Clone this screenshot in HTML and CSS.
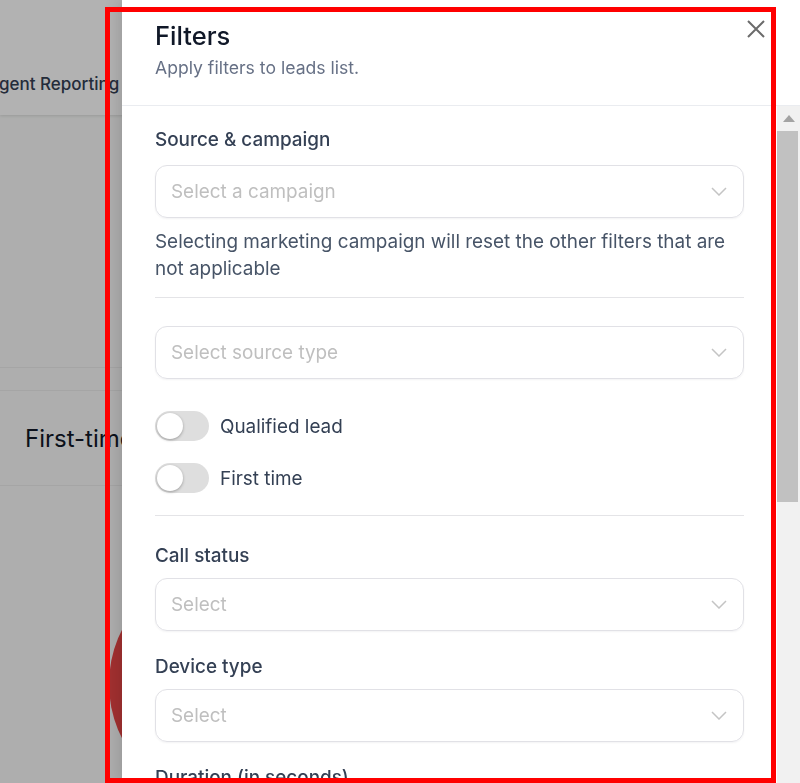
FILE: index.html
```html
<!DOCTYPE html>
<html lang="en">
<head>
    <meta charset="UTF-8">
    <meta name="viewport" content="width=device-width, initial-scale=1.0">
    <title>Leads - Filters</title>
    <link rel="stylesheet" href="styles.css">
</head>
<body>
    <!-- page behind the drawer -->
    <div class="app">
        <header class="topbar">
            <nav class="nav">
                <span class="nav-item">Agent Reporting</span>
            </nav>
        </header>
        <main class="content">
            <div class="summary"></div>
            <div class="row">
                <span class="row-title">First-time callers</span>
            </div>
            <div class="chart">
                <div class="pie"></div>
            </div>
        </main>
    </div>

    <div class="overlay"></div>

    <aside class="drawer">
        <div class="drawer-head">
            <div>
                <h2 class="drawer-title">Filters</h2>
                <p class="drawer-sub">Apply filters to leads list.</p>
            </div>
            <button class="close-btn" aria-label="Close">
                <svg width="18" height="18" viewBox="0 0 18 18">
                    <path d="M1 1L17 17M17 1L1 17" stroke="#6b6b6b" stroke-width="2" fill="none"/>
                </svg>
            </button>
        </div>

        <div class="drawer-main">
            <div class="drawer-body">
                <div class="field first">
                    <label class="field-label">Source &amp; campaign</label>
                    <div class="select">
                        <span>Select a campaign</span>
                        <svg class="chevron" width="16" height="9" viewBox="0 0 16 9"><path d="M1 1L8 8L15 1" stroke="#c4c4c4" stroke-width="1.5" fill="none"/></svg>
                    </div>
                    <p class="help">Selecting marketing campaign will reset the other filters that are not applicable</p>
                </div>

                <hr class="divider">

                <div class="select">
                    <span>Select source type</span>
                    <svg class="chevron" width="16" height="9" viewBox="0 0 16 9"><path d="M1 1L8 8L15 1" stroke="#c4c4c4" stroke-width="1.5" fill="none"/></svg>
                </div>

                <div class="toggles">
                    <label class="toggle-row"><span class="toggle"><span class="knob"></span></span>Qualified lead</label>
                    <label class="toggle-row"><span class="toggle"><span class="knob"></span></span>First time</label>
                </div>

                <hr class="divider">

                <div class="field">
                    <label class="field-label">Call status</label>
                    <div class="select">
                        <span>Select</span>
                        <svg class="chevron" width="16" height="9" viewBox="0 0 16 9"><path d="M1 1L8 8L15 1" stroke="#c4c4c4" stroke-width="1.5" fill="none"/></svg>
                    </div>
                </div>

                <div class="field">
                    <label class="field-label">Device type</label>
                    <div class="select">
                        <span>Select</span>
                        <svg class="chevron" width="16" height="9" viewBox="0 0 16 9"><path d="M1 1L8 8L15 1" stroke="#c4c4c4" stroke-width="1.5" fill="none"/></svg>
                    </div>
                </div>

                <div class="field">
                    <label class="field-label">Duration (in seconds)</label>
                    <div class="range">
                        <div class="select"><span>Min</span></div>
                        <div class="select"><span>Max</span></div>
                    </div>
                </div>
            </div>

            <!-- scrollbar -->
            <div class="scrollbar">
                <div class="scroll-up">
                    <svg width="12" height="7" viewBox="0 0 12 7"><path d="M0 7L6 0L12 7Z" fill="#a3a3a3"/></svg>
                </div>
                <div class="scroll-thumb"></div>
            </div>
        </div>
    </aside>

    <!-- annotation frame -->
    <div class="highlight"></div>
</body>
</html>
```

FILE: styles.css
```css
* {
    box-sizing: border-box;
}

body {
    margin: 0;
    padding: 0;
    font-family: Inter, "Noto Sans", sans-serif;
    background: #f9faf9;
    overflow: hidden;
}

/* background page */
.topbar {
    height: 115px;
    background: #fff;
    box-shadow: 0 1px 3px rgba(0, 0, 0, 0.12);
    display: flex;
    align-items: flex-end;
}

.nav {
    margin-left: -13px;
    padding-bottom: 21px;
}

.nav-item {
    font-size: 17px;
    font-weight: 500;
    color: #344054;
}

.summary {
    height: 253px;
    border-bottom: 1px solid #ececec;
}

.row {
    margin-top: 22px;
    height: 96px;
    border-top: 1px solid #ececec;
    border-bottom: 1px solid #ececec;
    display: flex;
    align-items: center;
    padding-left: 25px;
}

.row-title {
    font-size: 24px;
    color: #101828;
    white-space: nowrap;
}

.chart {
    padding: 78px 0 0 109px;
}

.pie {
    width: 240px;
    height: 240px;
    border-radius: 50%;
    background: #e94646;
}

.overlay {
    position: fixed;
    inset: 0;
    background: rgba(0, 0, 0, 0.3);
}

/* drawer */
.drawer {
    position: fixed;
    top: 0;
    right: 0;
    bottom: 0;
    width: 678px;
    background: #fff;
    display: flex;
    flex-direction: column;
    box-shadow: -4px 0 14px rgba(0, 0, 0, 0.12);
}

.drawer-head {
    display: flex;
    justify-content: space-between;
    align-items: flex-start;
    padding: 20px 35px 0 33px;
    height: 106px;
    border-bottom: 1px solid #eaecf0;
    flex-shrink: 0;
}

.drawer-title {
    margin: 0;
    font-size: 25.5px;
    line-height: 32px;
    font-weight: 500;
    color: #101828;
}

.drawer-sub {
    margin: 4px 0 0;
    font-size: 17.6px;
    line-height: 24px;
    color: #667085;
}

.close-btn {
    background: none;
    border: none;
    padding: 0;
    width: 18px;
    height: 18px;
    cursor: pointer;
}

.close-btn svg {
    display: block;
}

.drawer-main {
    flex: 1;
    display: flex;
    min-height: 0;
}

.drawer-body {
    flex: 1;
    overflow: hidden;
    padding: 20px 33px 40px 33px;
}

.scrollbar {
    width: 23px;
    background: #f1f1f1;
    flex-shrink: 0;
}

.scroll-up {
    height: 25px;
    display: flex;
    justify-content: center;
    padding-top: 9px;
}

.scroll-up svg {
    display: block;
}

.scroll-thumb {
    width: 21px;
    height: 371px;
    background: #c1c1c1;
}

.field-label {
    display: block;
    font-size: 18.9px;
    line-height: 27px;
    font-weight: 500;
    color: #344054;
    margin-bottom: 9px;
}

.field {
    margin-top: 22px;
}

.field.first {
    margin-top: 0;
}

.field.first .field-label {
    margin-bottom: 12px;
}

.select {
    height: 53px;
    border: 1px solid #e1e1e6;
    border-radius: 12px;
    box-shadow: 0 1px 2px rgba(16, 24, 40, 0.05);
    display: flex;
    align-items: center;
    justify-content: space-between;
    padding: 0 16px 0 15px;
    font-size: 18.9px;
    color: #bfbfbf;
    white-space: nowrap;
}

.help {
    margin: 10px 0 0;
    font-size: 18.9px;
    line-height: 27px;
    color: #475467;
}

.divider {
    border: none;
    border-top: 1px solid #e4e4e7;
    margin: 15px 0 28px;
}

.toggles {
    display: flex;
    flex-direction: column;
    gap: 22px;
    margin: 32px 0 22px;
}

.toggle-row {
    display: flex;
    align-items: center;
    gap: 11px;
    font-size: 18.9px;
    color: #344054;
}

.toggle {
    width: 54px;
    height: 30px;
    border-radius: 15px;
    background: #dedede;
    padding: 2px;
}

.knob {
    display: block;
    width: 26px;
    height: 26px;
    border-radius: 50%;
    background: #fff;
    box-shadow: 0 1px 3px rgba(0, 0, 0, 0.3);
}

.toggles + .divider {
    margin: 0 0 26px;
}

.range {
    display: flex;
    gap: 16px;
}

.range .select {
    flex: 1;
}

.highlight {
    position: fixed;
    left: 105px;
    top: 7px;
    width: 671px;
    height: 776px;
    border: 5px solid #ff0000;
    pointer-events: none;
}
```
